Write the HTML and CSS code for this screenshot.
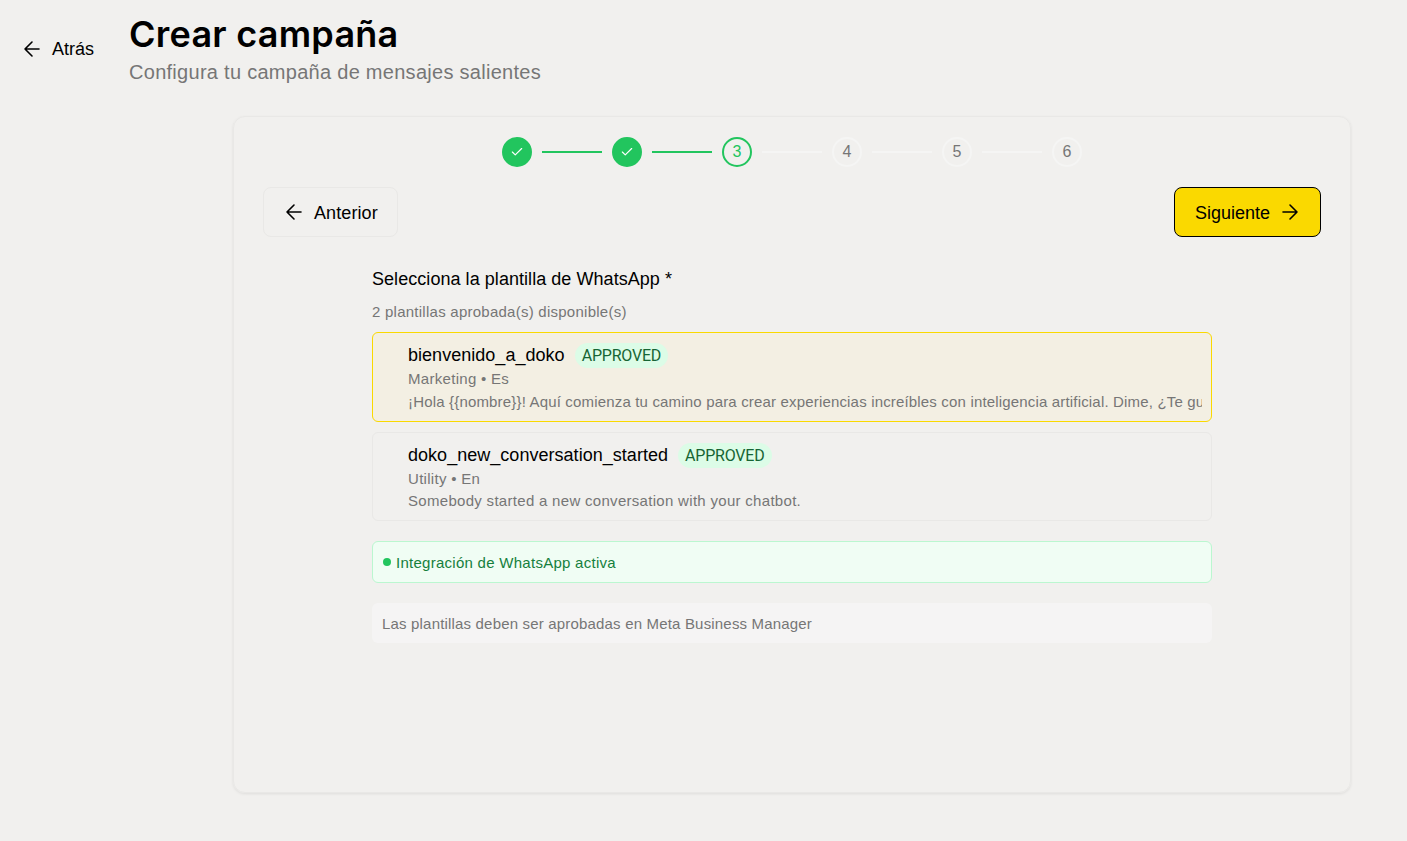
FILE: index.html
```html
<!DOCTYPE html>
<html lang="es">
<head>
<meta charset="utf-8">
<title>Crear campaña</title>
<link rel="stylesheet" href="styles.css">
</head>
<body>
<header class="top">
  <a class="back">
    <svg class="ico" viewBox="0 0 24 24"><path d="M19 12H5M12 19l-7-7 7-7"/></svg>
    <span>Atrás</span>
  </a>
  <div class="heading">
    <h1>Crear campaña</h1>
    <p>Configura tu campaña de mensajes salientes</p>
  </div>
</header>
<main class="card">
  <div class="stepper">
    <span class="step done"><svg class="check" viewBox="0 0 24 24"><path d="M20 6 9 17l-5-5"/></svg></span>
    <span class="line on"></span>
    <span class="step done"><svg class="check" viewBox="0 0 24 24"><path d="M20 6 9 17l-5-5"/></svg></span>
    <span class="line on"></span>
    <span class="step current">3</span>
    <span class="line"></span>
    <span class="step">4</span>
    <span class="line"></span>
    <span class="step">5</span>
    <span class="line"></span>
    <span class="step">6</span>
  </div>
  <div class="nav">
    <button class="btn prev"><svg class="ico" viewBox="0 0 24 24"><path d="M19 12H5M12 19l-7-7 7-7"/></svg><span>Anterior</span></button>
    <button class="btn next"><span>Siguiente</span><svg class="ico" viewBox="0 0 24 24"><path d="M5 12h14M12 5l7 7-7 7"/></svg></button>
  </div>
  <section class="form">
    <label class="label">Selecciona la plantilla de WhatsApp *</label>
    <p class="count">2 plantillas aprobada(s) disponible(s)</p>
    <div class="tpl selected">
      <div class="tpl-head"><span class="name">bienvenido_a_doko</span><span class="badge">APPROVED</span></div>
      <div class="meta">Marketing • Es</div>
      <div class="body">¡Hola {{nombre}}! Aquí comienza tu camino para crear experiencias increíbles con inteligencia artificial. Dime, ¿Te gustaría empezar a crear tu primer chatbot hoy mismo con nosotros?</div>
    </div>
    <div class="tpl">
      <div class="tpl-head"><span class="name">doko_new_conversation_started</span><span class="badge">APPROVED</span></div>
      <div class="meta">Utility • En</div>
      <div class="body">Somebody started a new conversation with your chatbot.</div>
    </div>
    <div class="status"><span class="dot"></span>Integración de WhatsApp activa</div>
    <div class="note">Las plantillas deben ser aprobadas en Meta Business Manager</div>
  </section>
</main>
</body>
</html>
```
FILE: styles.css
```css
* { box-sizing: border-box; }
html, body { margin: 0; height: 100%; overflow: hidden; }
body {
  background: #f1f0ee;
  font-family: "Liberation Sans", Arial, sans-serif;
  color: #000;
  padding: 13px 56px 0 20px;
}
.top { display: flex; align-items: flex-start; height: 103px; }
.back { display: flex; align-items: center; gap: 8px; width: 109px; margin-top: 24px; font-size: 18px; line-height: 24px; }
.ico { width: 24px; height: 24px; fill: none; stroke: currentColor; stroke-width: 1.6; stroke-linecap: round; stroke-linejoin: round; flex: none; }
.heading h1 { margin: 0; font-family: Inter, "Liberation Sans", sans-serif; font-size: 36px; line-height: 42px; font-weight: 600; letter-spacing: .25px; }
.heading p { margin: 3px 0 0; font-size: 20px; line-height: 28px; color: #767676; letter-spacing: .28px; }
.card {
  margin-left: 213px;
  height: 677px;
  border: 1px solid #e9e8e6;
  border-radius: 12px;
  box-shadow: 0 1px 3px rgba(0,0,0,.08);
  padding: 19px 29px;
}
.stepper { display: flex; justify-content: center; align-items: center; gap: 10px; height: 32px; }
.step {
  width: 30px; height: 30px; border-radius: 50%;
  border: 2px solid #f5f5f4;
  display: flex; align-items: center; justify-content: center;
  font-size: 16px; color: #767676;
}
.step.done { background: #22c55e; border-color: #22c55e; }
.step.current { border-color: #22c55e; color: #22c55e; }
.check { width: 14px; height: 14px; fill: none; stroke: #fff; stroke-width: 2; stroke-linecap: round; stroke-linejoin: round; }
.line { width: 60px; height: 2px; background: #f5f5f4; }
.line.on { background: #22c55e; }
.nav { display: flex; justify-content: space-between; margin-top: 19px; }
.btn { display: flex; align-items: center; gap: 8px; height: 50px; border-radius: 8px; font: inherit; font-size: 18px; color: #000; }
.btn span { padding-top: 2px; }
.prev { background: transparent; border: 1px solid #e9e8e6; padding: 0 19px 0 18px; letter-spacing: .1px; }
.next { background: #fad900; border: 1px solid #000; padding: 0 18px 0 20px; }
.form { width: 840px; margin: 30px auto 0; }
.label { display: block; font-size: 18px; line-height: 24px; letter-spacing: .05px; }
.count { margin: 11px 0 10px; font-size: 15px; line-height: 20px; color: #767676; letter-spacing: .25px; }
.tpl { border: 1px solid #e9e8e6; border-radius: 6px; padding: 10px 9px 8px 35px; height: 89px; margin-bottom: 11px; }
.tpl.selected { background: #f3efe3; border-color: #fad900; height: 90px; margin-bottom: 10px; }
.tpl.selected .body { margin-top: 1px; letter-spacing: .17px; }
.tpl-head { display: flex; align-items: center; gap: 10px; height: 25px; }
.name { font-size: 18px; letter-spacing: .03px; }
.badge { background: #dcfce7; color: #166534; border-radius: 999px; padding: 0 7px; font-family: Roboto, "Liberation Sans", sans-serif; font-size: 16px; line-height: 25px; letter-spacing: -.2px; }
.meta, .body { font-size: 15px; line-height: 22px; color: #767676; letter-spacing: .3px; white-space: nowrap; overflow: hidden; }
.status { display: flex; align-items: center; gap: 5px; margin-top: 20px; height: 42px; padding: 0 10px; background: #f0fdf4; border: 1px solid #bbf7d0; border-radius: 6px; font-size: 15px; letter-spacing: .27px; color: #15803d; }
.dot { width: 8px; height: 8px; border-radius: 50%; background: #22c55e; }
.note { margin-top: 20px; height: 40px; padding: 0 10px; display: flex; align-items: center; background: #f5f4f4; border-radius: 6px; font-size: 15px; letter-spacing: .18px; color: #767676; }
```
